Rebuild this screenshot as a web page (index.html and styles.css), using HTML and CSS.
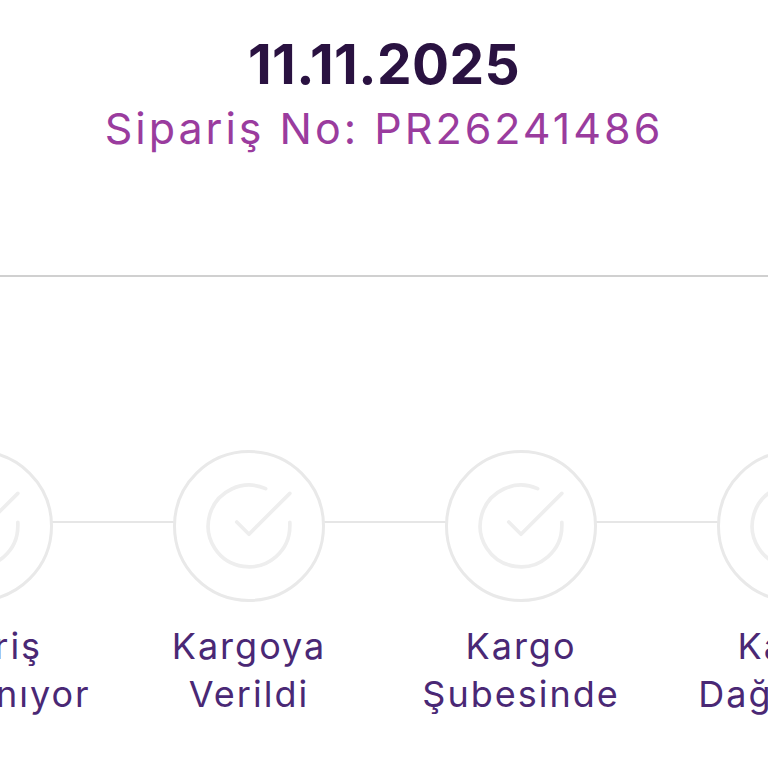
FILE: index.html
```html
<!DOCTYPE html>
<html lang="tr">
<head>
<meta charset="utf-8">
<title>Sipariş</title>
<link rel="stylesheet" href="styles.css">
</head>
<body>
<header class="order-head">
  <div class="order-date">11.11.2025</div>
  <div class="order-no">Sipariş No: PR26241486</div>
</header>
<hr class="divider">
<section class="stepper-wrap">
  <ol class="stepper">
    <li class="step">
      <div class="step-circle"><svg class="check" viewBox="0 0 24 24"><path d="M22 11.08V12a10 10 0 1 1-5.93-9.14"/><polyline points="22 4 12 14.01 9 11.01"/></svg></div>
      <div class="step-label">Sipariş<br>Hazırlanıyor</div>
    </li>
    <li class="step">
      <div class="step-circle"><svg class="check" viewBox="0 0 24 24"><path d="M22 11.08V12a10 10 0 1 1-5.93-9.14"/><polyline points="22 4 12 14.01 9 11.01"/></svg></div>
      <div class="step-label">Kargoya<br>Verildi</div>
    </li>
    <li class="step">
      <div class="step-circle"><svg class="check" viewBox="0 0 24 24"><path d="M22 11.08V12a10 10 0 1 1-5.93-9.14"/><polyline points="22 4 12 14.01 9 11.01"/></svg></div>
      <div class="step-label">Kargo<br>Şubesinde</div>
    </li>
    <li class="step">
      <div class="step-circle"><svg class="check" viewBox="0 0 24 24"><path d="M22 11.08V12a10 10 0 1 1-5.93-9.14"/><polyline points="22 4 12 14.01 9 11.01"/></svg></div>
      <div class="step-label">Kargo<br>Dağıtımda</div>
    </li>
    <li class="step">
      <div class="step-circle"><svg class="check" viewBox="0 0 24 24"><path d="M22 11.08V12a10 10 0 1 1-5.93-9.14"/><polyline points="22 4 12 14.01 9 11.01"/></svg></div>
      <div class="step-label">Teslim<br>Edildi</div>
    </li>
  </ol>
</section>
</body>
</html>
```
FILE: styles.css
```css
html, body {
  margin: 0;
  padding: 0;
  background: #ffffff;
  overflow: hidden;
}
body {
  font-family: Inter, "Noto Sans", sans-serif;
  width: 768px;
  height: 768px;
}
.order-head {
  padding-top: 32px;
  text-align: center;
}
.order-date {
  font-size: 55px;
  line-height: 64px;
  font-weight: 700;
  color: #2a1241;
  letter-spacing: 0.4px;
}
.order-no {
  margin-top: 4px;
  font-size: 43px;
  line-height: 56px;
  font-weight: 400;
  color: #9a3c9e;
  letter-spacing: 3px;
}
.divider {
  margin: 119px 0 0 0;
  border: 0;
  height: 2px;
  background: #d0d0d0;
}
.stepper-wrap {
  padding-top: 173px;
}
.stepper {
  list-style: none;
  margin: 0 0 0 -159px;
  padding: 0;
  display: flex;
  width: max-content;
}
.step {
  position: relative;
  width: 272px;
  display: flex;
  flex-direction: column;
  align-items: center;
}
.step::before {
  content: "";
  position: absolute;
  left: 0;
  right: 0;
  top: 71px;
  height: 2px;
  background: #e6e6e6;
}
.step-circle {
  position: relative;
  width: 146px;
  height: 146px;
  border: 3px solid #e9e9e9;
  border-radius: 50%;
  background: #ffffff;
  display: flex;
  align-items: center;
  justify-content: center;
}
.check {
  width: 98px;
  height: 98px;
  fill: none;
  stroke: #eeeeee;
  stroke-width: 0.9;
  stroke-linecap: round;
  stroke-linejoin: round;
}
.step-label {
  margin-top: 20px;
  font-size: 36px;
  line-height: 48px;
  color: #4a2875;
  text-align: center;
  white-space: nowrap;
  letter-spacing: 2px;
}
```
